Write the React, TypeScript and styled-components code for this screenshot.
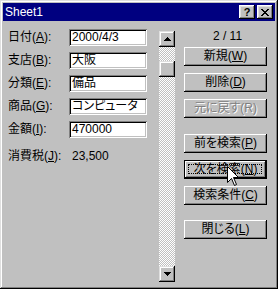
import React from 'react';
import styled, { createGlobalStyle } from 'styled-components';

const GlobalStyle = createGlobalStyle`
    html, body {
        margin:0;
        padding:0;
        background:#c0c0c0;
    }
    body {
        font-family:"Liberation Sans", "Noto Sans CJK JP", sans-serif;
        font-size:12px;
        color:#000;
    }
`;

const Window = styled.div`
    position:relative;
    box-sizing:border-box;
    width:278px;
    height:289px;
    padding:3px;
    background:#c0c0c0;
    box-shadow:inset -1px -1px #000, inset 1px 1px #dfdfdf, inset -2px -2px #808080, inset 2px 2px #fff;
    display:flex;
    flex-direction:column;
    overflow:hidden;
`;

const TitleBar = styled.div`
    height:18px;
    background:#000080;
    display:flex;
    align-items:center;
    padding:0 2px;
    color:#fff;
`;

const Title = styled.span`
    flex:1;
    font-size:12px;
    line-height:18px;
`;

const CapButton = styled.div<{ $gap?: number }>`
    box-sizing:border-box;
    width:16px;
    height:14px;
    margin-left:${p => p.$gap ?? 0}px;
    background:#c0c0c0;
    box-shadow:inset -1px -1px #000, inset 1px 1px #fff, inset -2px -2px #808080, inset 2px 2px #dfdfdf;
    display:flex;
    align-items:center;
    justify-content:center;
    color:#000;
    font-family:"Liberation Sans", sans-serif;
    font-weight:700;
    font-size:11px;
    line-height:14px;
`;

const Body = styled.div`
    flex:1;
    display:flex;
    padding:8px 0 0 5px;
`;

const Form = styled.div`
    width:139px;
    display:flex;
    flex-direction:column;
    gap:6px;
`;

const Field = styled.div<{ $extra?: number }>`
    display:flex;
    align-items:center;
    height:17px;
    margin-top:${p => p.$extra ?? 0}px;
`;

const Label = styled.span`
    width:61px;
    white-space:nowrap;
    line-height:17px;
`;

const Key = styled.span`
    text-decoration:underline;
    text-underline-offset:1px;
`;

const TextBox = styled.div`
    box-sizing:border-box;
    width:78px;
    height:17px;
    padding:0 3px;
    background:#fff;
    box-shadow:inset 1px 1px #808080, inset -1px -1px #fff, inset 2px 2px #000, inset -2px -2px #c0c0c0;
    line-height:17px;
    white-space:nowrap;
    overflow:hidden;
    font-feature-settings:"palt";
`;

const Value = styled.span`
    padding-left:3px;
    line-height:17px;
`;

const ScrollBar = styled.div`
    width:16px;
    height:251px;
    margin:2px 0 0 12px;
    display:flex;
    flex-direction:column;
`;

const Raised = styled.div`
    box-sizing:border-box;
    width:16px;
    height:16px;
    flex:none;
    background:#c0c0c0;
    box-shadow:inset -1px -1px #000, inset 1px 1px #dfdfdf, inset -2px -2px #808080, inset 2px 2px #fff;
    display:flex;
    align-items:center;
    justify-content:center;
`;

const Track = styled.div`
    flex:1;
    background:repeating-conic-gradient(#c0c0c0 0 25%, #fff 0 50%) 0 0 / 2px 2px;
    display:flex;
    flex-direction:column;
`;

const Thumb = styled(Raised)<{ $top: number }>`
    margin-top:${p => p.$top}px;
`;

const Side = styled.div`
    width:83px;
    margin-left:9px;
    display:flex;
    flex-direction:column;
`;

const Counter = styled.div`
    height:14px;
    line-height:14px;
    text-align:center;
    padding-left:4px;
`;

const Buttons = styled.div`
    margin-top:4px;
    display:flex;
    flex-direction:column;
    gap:7px;
`;

const Button = styled.div<{ $space?: number; $disabled?: boolean; $default?: boolean }>`
    position:relative;
    box-sizing:border-box;
    height:19px;
    margin-top:${p => p.$space ?? 0}px;
    background:#c0c0c0;
    border:${p => (p.$default ? '1px solid #000' : '0')};
    box-shadow:inset -1px -1px #000, inset 1px 1px #fff, inset -2px -2px #808080;
    display:flex;
    align-items:center;
    justify-content:center;
    line-height:17px;
    white-space:nowrap;
    font-feature-settings:"palt";
    color:${p => (p.$disabled ? '#808080' : '#000')};
    text-shadow:${p => (p.$disabled ? '1px 1px #fff' : 'none')};
`;

const Focus = styled.span`
    position:absolute;
    left:3px;
    top:3px;
    right:4px;
    bottom:4px;
    border:1px dotted #000;
`;

const Cursor = styled.svg`
    position:absolute;
    left:227px;
    top:166px;
`;

const ArrowUp = () => (
    <svg width="7" height="4" viewBox="0 0 7 4"><path d="M3 0h1v1h1v1h1v1h1v1H0V3h1V2h1V1h1z" fill="#000" /></svg>
);

const ArrowDown = () => (
    <svg width="7" height="4" viewBox="0 0 7 4"><path d="M0 0h7v1H6v1H5v1H4v1H3V3H2V2H1V1H0z" fill="#000" /></svg>
);

const CloseGlyph = () => (
    <svg width="8" height="7" viewBox="0 0 8 7">
        <path d="M0 0h2v1h1v1h2V1h1V0h2v1H7v1H6v1H5v1h1v1h1v1h1v1H6V6H5V5H3v1H2v1H0V6h1V5h1V4h1V3H2V2H1V1H0z" fill="#000" />
    </svg>
);

const fields = [
    { name: '日付', key: 'A', value: '2000/4/3' },
    { name: '支店', key: 'B', value: '大阪' },
    { name: '分類', key: 'E', value: '備品' },
    { name: '商品', key: 'G', value: 'コンピュータ' },
    { name: '金額', key: 'I', value: '470000' },
];

const App = () => {
    return (
        <>
            <GlobalStyle />
            <Window>
                <TitleBar>
                    <Title>Sheet1</Title>
                    <CapButton>?</CapButton>
                    <CapButton $gap={2}><CloseGlyph /></CapButton>
                </TitleBar>
                <Body>
                    <Form>
                        {fields.map(f => (
                            <Field key={f.key}>
                                <Label>{f.name}(<Key>{f.key}</Key>):</Label>
                                <TextBox>{f.value}</TextBox>
                            </Field>
                        ))}
                        <Field $extra={4}>
                            <Label>消費税(<Key>J</Key>):</Label>
                            <Value>23,500</Value>
                        </Field>
                    </Form>
                    <ScrollBar>
                        <Raised><ArrowUp /></Raised>
                        <Track>
                            <Thumb $top={14} />
                        </Track>
                        <Raised><ArrowDown /></Raised>
                    </ScrollBar>
                    <Side>
                        <Counter>2 / 11</Counter>
                        <Buttons>
                            <Button>新規(<Key>W</Key>)</Button>
                            <Button>削除(<Key>D</Key>)</Button>
                            <Button $disabled>元に戻す(R)</Button>
                            <Button $space={9}>前を検索(<Key>P</Key>)</Button>
                            <Button $default>次を検索(<Key>N</Key>)<Focus /></Button>
                            <Button>検索条件(<Key>C</Key>)</Button>
                            <Button $space={8}>閉じる(<Key>L</Key>)</Button>
                        </Buttons>
                    </Side>
                </Body>
                <Cursor width="12" height="20" viewBox="0 0 12 20">
                    <path d="M0.5 0.5V16.5L4.5 12.5L7.5 19.5L9.5 18.5L6.5 11.5H11.5Z" fill="#fff" stroke="#000" strokeWidth="1" />
                </Cursor>
            </Window>
        </>
    );
};

export default App;
